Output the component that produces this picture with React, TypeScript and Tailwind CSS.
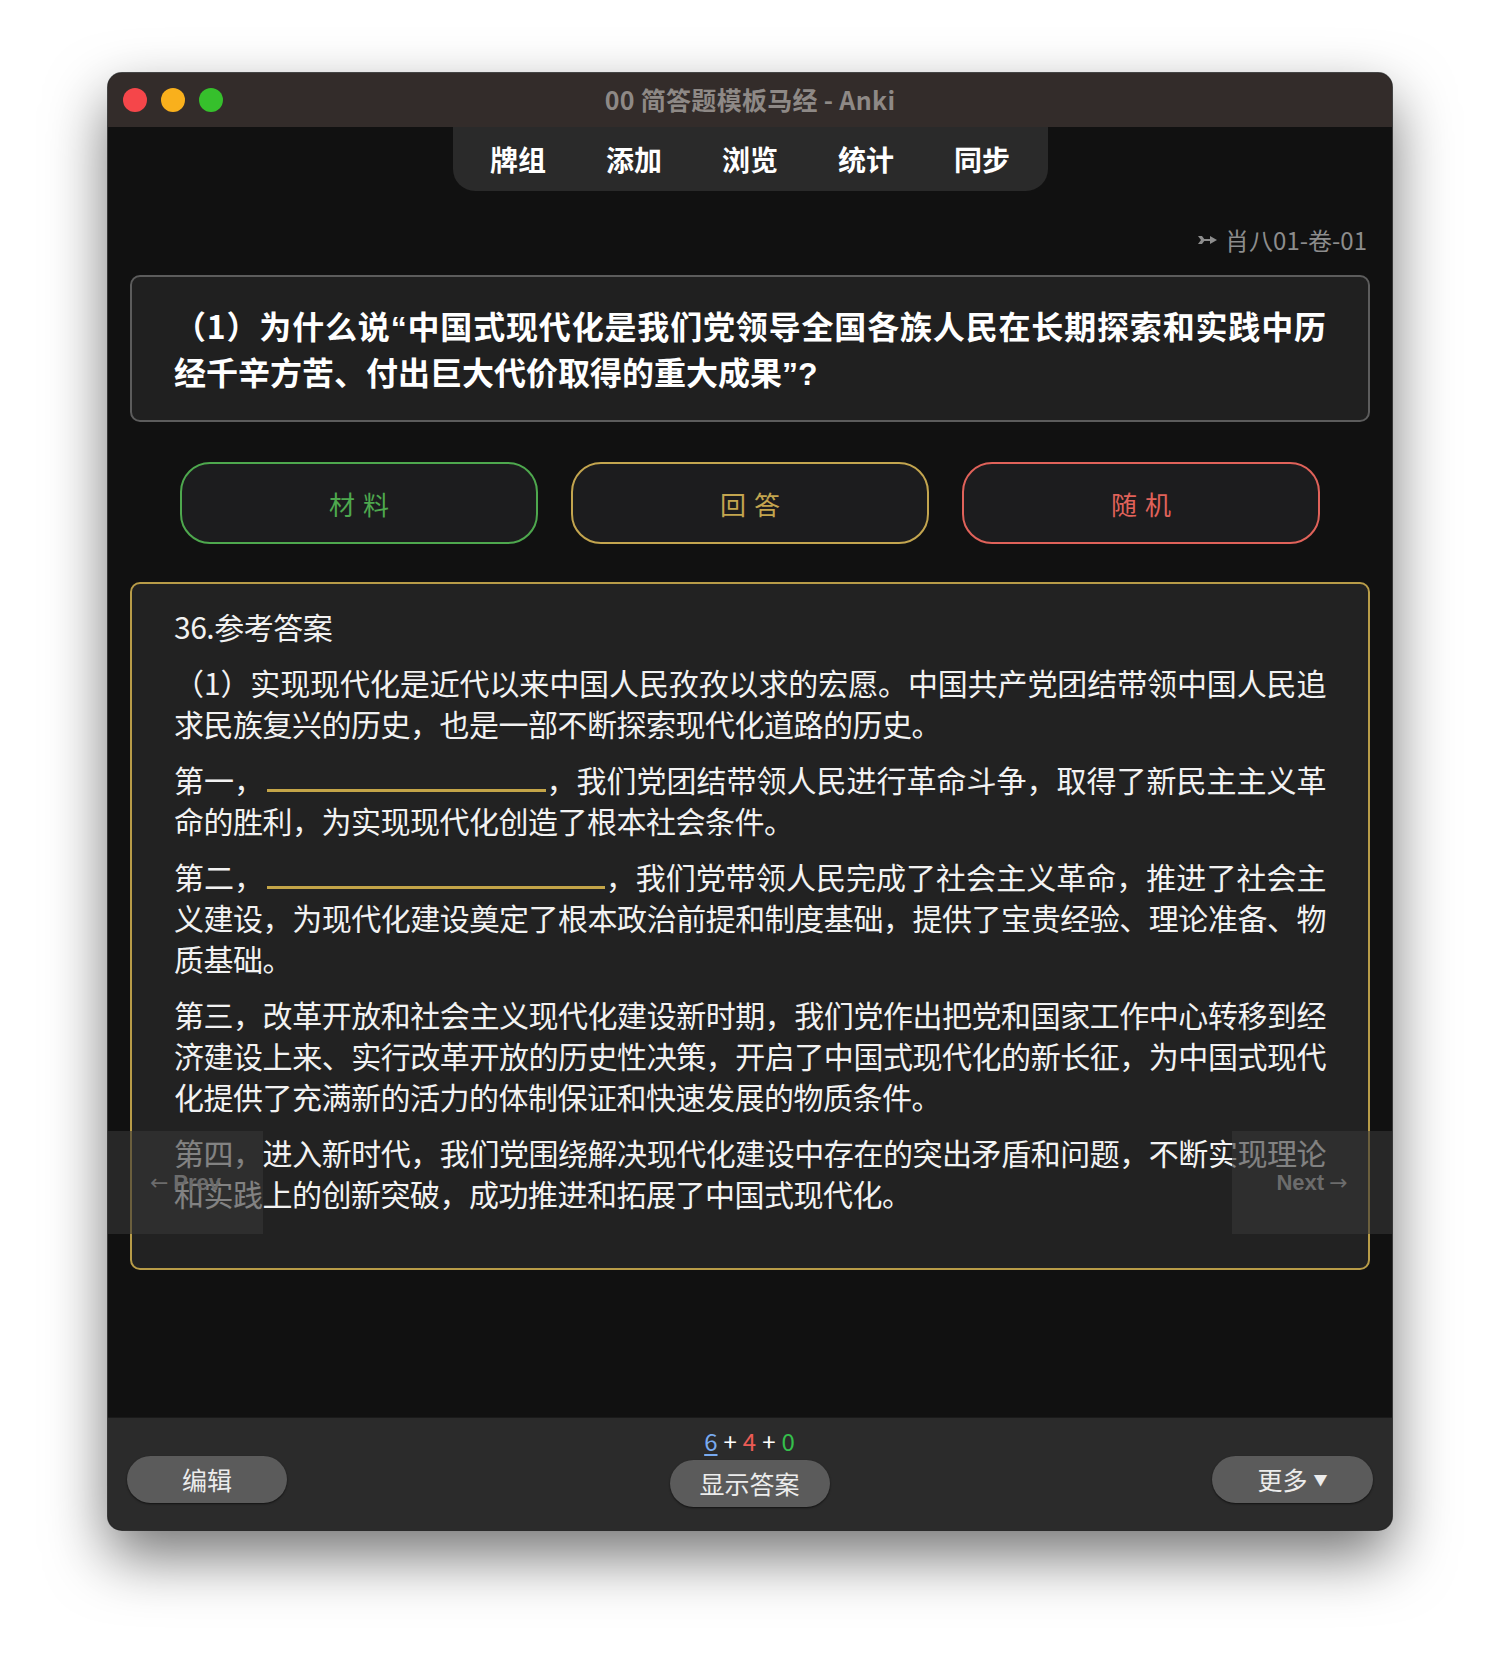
import type { ReactNode } from "react";

// a wrapped line that is stretched to the full measure, like justified text
function Line({ children }: { children: ReactNode }) {
  return <span className="block whitespace-nowrap [text-align-last:justify]">{children}</span>;
}

function Blank({ wide }: { wide?: boolean }) {
  return (
    <span
      className={
        wide
          ? "inline-block w-[338px] h-[20px] border-b-[3px] border-[#c4a548] ml-[3px]"
          : "inline-block w-[279px] h-[20px] border-b-[3px] border-[#c4a548] ml-[3px]"
      }
    />
  );
}

export default function App() {
  const tabs = ["牌组", "添加", "浏览", "统计", "同步"];

  return (
    <div className="w-[1500px] h-[1673px] bg-white pt-[73px] pl-[108px] font-['Noto_Sans_CJK_SC',sans-serif]">
      <div className="relative w-[1284px] h-[1457px] rounded-[14px] overflow-hidden flex flex-col bg-[#111111] shadow-[0_26px_60px_rgba(0,0,0,0.55)] ring-1 ring-black/70">
        {/* title bar */}
        <div className="h-[54px] shrink-0 bg-[#332c2a] grid grid-cols-[1fr_auto_1fr] items-center">
          <div className="flex gap-[14px] pl-[15px]">
            <span className="w-[24px] h-[24px] rounded-full bg-[#f5464a]" />
            <span className="w-[24px] h-[24px] rounded-full bg-[#f9b01c]" />
            <span className="w-[24px] h-[24px] rounded-full bg-[#36c02c]" />
          </div>
          <div className="text-[25px] font-bold text-[#8e8986] tracking-[0.3px]">
            00 简答题模板马经 - Anki
          </div>
          <div />
        </div>

        {/* main area */}
        <div className="relative flex-1 flex flex-col px-[22px]">
          <div className="self-center w-[595px] h-[64px] rounded-b-[22px] bg-[#2a2a2a] flex items-center justify-center gap-[60px] text-[28px] font-bold text-white">
            {tabs.map((t) => (
              <span key={t}>{t}</span>
            ))}
          </div>

          <div className="mt-[34px] self-end pr-[3px] flex items-center gap-[8px] text-[24px] leading-[30px] text-[#8d8d8d]">
            <svg width="19" height="10" viewBox="0 0 19 10" fill="#8d8d8d">
              <polygon points="0,1 4,1 7,5 4,9 0,9 3,5" />
              <rect x="5" y="4" width="9" height="2" />
              <polygon points="12,1 19,5 12,9" />
            </svg>
            <span>肖八01-卷-01</span>
          </div>

          <div className="mt-[20px] h-[147px] border-2 border-[#5c5c5c] rounded-[10px] bg-[#202020] px-[42px] pt-[25px] text-[32px] leading-[46px] font-bold text-white">
            <Line>
              （1）为什么说<span className="font-['Liberation_Sans',sans-serif] leading-none">“</span>
              中国式现代化是我们党领导全国各族人民在长期探索和实践中历
            </Line>
            经千辛方苦、付出巨大代价取得的重大成果
            <span className="font-['Liberation_Sans',sans-serif] leading-none">”?</span>
          </div>

          <div className="mt-[40px] flex justify-center gap-[33px] text-[26px]">
            <button className="w-[358px] h-[82px] rounded-[30px] border-2 border-[#4ea84e] bg-[#1c1c1e] text-[#4ea84e] tracking-[8px] pl-[8px]">
              材料
            </button>
            <button className="w-[358px] h-[82px] rounded-[30px] border-2 border-[#c3a54f] bg-[#1c1c1e] text-[#c3a54f] tracking-[8px] pl-[8px]">
              回答
            </button>
            <button className="w-[358px] h-[82px] rounded-[30px] border-2 border-[#e0625a] bg-[#1c1c1e] text-[#e0625a] tracking-[8px] pl-[8px]">
              随机
            </button>
          </div>

          <div className="mt-[38px] border-2 border-[#b89c48] rounded-[10px] bg-[#222222] px-[42px] pt-[22px] pb-[54px] text-[30px] leading-[41px] tracking-[-0.5px] text-[#f2f2f2] flex flex-col gap-[15px]">
            <p>36.参考答案</p>
            <p>
              <Line>（1）实现现代化是近代以来中国人民孜孜以求的宏愿。中国共产党团结带领中国人民追</Line>
              求民族复兴的历史，也是一部不断探索现代化道路的历史。
            </p>
            <p>
              <Line>
                第一，
                <Blank />
                ，我们党团结带领人民进行革命斗争，取得了新民主主义革
              </Line>
              命的胜利，为实现现代化创造了根本社会条件。
            </p>
            <p>
              <Line>
                第二，
                <Blank wide />
                ，我们党带领人民完成了社会主义革命，推进了社会主
              </Line>
              <Line>义建设，为现代化建设奠定了根本政治前提和制度基础，提供了宝贵经验、理论准备、物</Line>
              质基础。
            </p>
            <p>
              <Line>第三，改革开放和社会主义现代化建设新时期，我们党作出把党和国家工作中心转移到经</Line>
              <Line>济建设上来、实行改革开放的历史性决策，开启了中国式现代化的新长征，为中国式现代</Line>
              化提供了充满新的活力的体制保证和快速发展的物质条件。
            </p>
            <p>
              <Line>第四，进入新时代，我们党围绕解决现代化建设中存在的突出矛盾和问题，不断实现理论</Line>
              和实践上的创新突破，成功推进和拓展了中国式现代化。
            </p>
          </div>

          {/* prev / next overlays */}
          <div className="absolute left-0 top-[1004px] w-[155px] h-[103px] bg-[rgba(55,55,55,0.6)] flex items-center justify-center gap-[5px] text-[22px] leading-none text-[#6c6c6c] font-['Liberation_Sans',sans-serif]">
            <span className="font-normal text-[22px] font-['DejaVu_Sans',sans-serif]">←</span>
            <span className="font-bold">Prev</span>
          </div>
          <div className="absolute right-0 top-[1004px] w-[160px] h-[103px] bg-[rgba(55,55,55,0.6)] flex items-center justify-center gap-[5px] text-[22px] leading-none text-[#6c6c6c] font-['Liberation_Sans',sans-serif]">
            <span className="font-bold">Next</span>
            <span className="font-normal text-[22px] font-['DejaVu_Sans',sans-serif]">→</span>
          </div>
        </div>

        {/* bottom bar */}
        <div className="h-[113px] shrink-0 bg-[#2b2b2b] border-t border-[#1a1a1a] px-[19px] flex items-start justify-between">
          <button className="mt-[38px] w-[160px] h-[47px] rounded-full bg-[#5b5b5b] text-[25px] text-[#ececec] shadow-[0_1px_2px_rgba(0,0,0,0.6)]">
            编辑
          </button>
          <div className="pt-[9px] flex flex-col items-center">
            <div className="text-[24px] leading-[28px] text-white flex gap-[6px]">
              <span className="text-[#78aaf0] underline underline-offset-[3px]">6</span>
              <span>+</span>
              <span className="text-[#ec5b55]">4</span>
              <span>+</span>
              <span className="text-[#35c04b]">0</span>
            </div>
            <button className="mt-[5px] w-[160px] h-[47px] rounded-full bg-[#5b5b5b] text-[25px] text-[#ececec] shadow-[0_1px_2px_rgba(0,0,0,0.6)]">
              显示答案
            </button>
          </div>
          <button className="mt-[38px] w-[161px] h-[47px] rounded-full bg-[#5b5b5b] text-[25px] text-[#ececec] shadow-[0_1px_2px_rgba(0,0,0,0.6)] flex items-center justify-center gap-[6px]">
            <span>更多</span>
            <span className="text-[14px]">▼</span>
          </button>
        </div>
      </div>
    </div>
  );
}
